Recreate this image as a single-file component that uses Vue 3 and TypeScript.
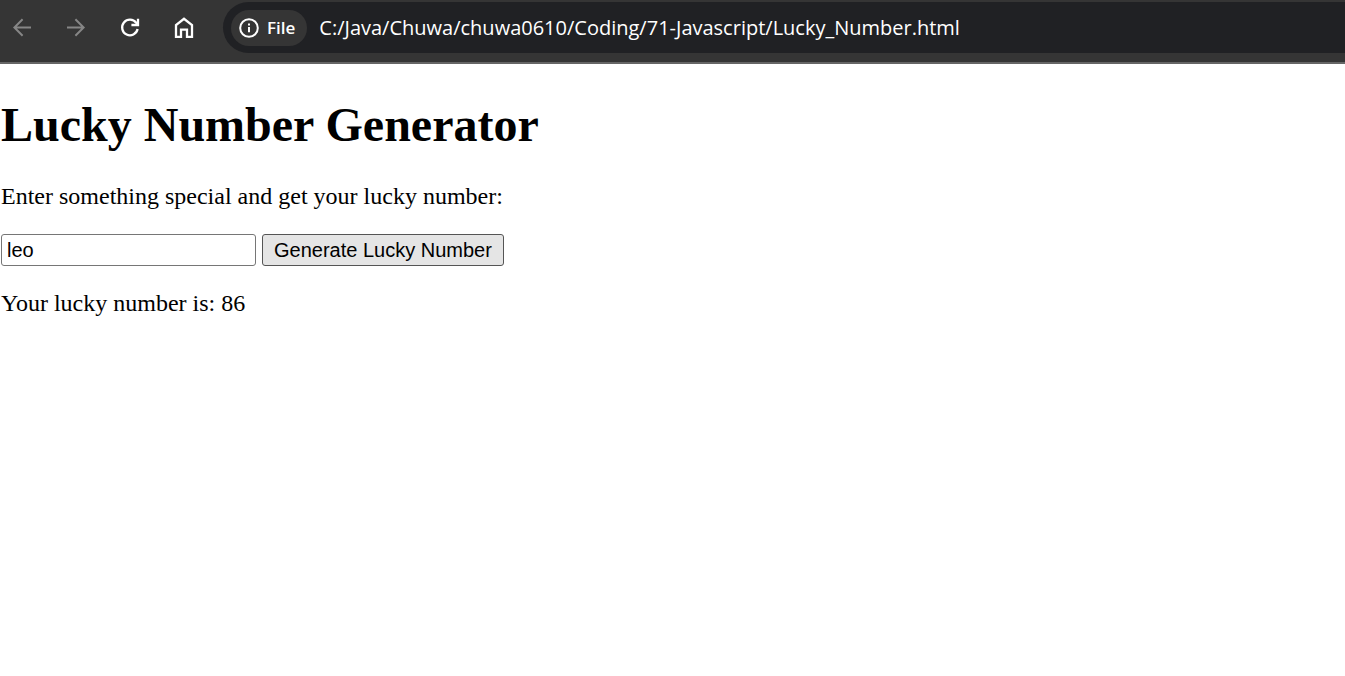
<script setup lang="ts">
import { ref } from 'vue'

const address = ref('C:/Java/Chuwa/chuwa0610/Coding/71-Javascript/Lucky_Number.html')
const phrase = ref('leo')
const luckyNumber = ref(86)

function generate(): void {
  luckyNumber.value = Math.floor(Math.random() * 100) + 1
}
</script>

<template>
  <div class="window">
    <header class="toolbar">
      <nav class="nav" aria-label="Browser navigation">
        <button class="nav-button" type="button" aria-label="Back" disabled>
          <svg width="24" height="24" viewBox="0 0 24 24"><path d="M21 11.5H4.4M12.6 3.3l-8.2 8.2 8.2 8.2" /></svg>
        </button>
        <button class="nav-button" type="button" aria-label="Forward" disabled>
          <svg width="24" height="24" viewBox="0 0 24 24"><path d="M3 11.5h16.6M11.4 3.3l8.2 8.2-8.2 8.2" /></svg>
        </button>
        <button class="nav-button" type="button" aria-label="Reload">
          <svg width="24" height="24" viewBox="0 0 24 24">
            <path d="M19.6 13.1A7.8 7.8 0 1 1 18.2 6.8L20 8.6" /><path d="M20 2.8V9h-6.6" />
          </svg>
        </button>
        <button class="nav-button" type="button" aria-label="Home">
          <svg width="24" height="24" viewBox="0 0 24 24"><path d="M4 20.8V9l8-6.2L20 9v11.8h-5v-7.2H9v7.2z" /></svg>
        </button>
      </nav>
      <div class="omnibox">
        <button class="chip" type="button">
          <svg width="20" height="20" viewBox="0 0 20 20">
            <circle cx="10" cy="10" r="8.8" /><path d="M10 9v5.2M10 5.4v2" />
          </svg>
          <span>File</span>
        </button>
        <input v-model="address" class="address" type="text" aria-label="Address" spellcheck="false" />
      </div>
    </header>
    <main class="page">
      <h1>Lucky Number Generator</h1>
      <label class="prompt" for="phrase">Enter something special and get your lucky number:</label>
      <form class="form" @submit.prevent="generate">
        <input id="phrase" v-model="phrase" class="phrase" type="text" />
        <button class="generate" type="submit">Generate Lucky Number</button>
      </form>
      <p class="result">Your lucky number is: {{ luckyNumber }}</p>
    </main>
  </div>
</template>

<style>
body {
  margin: 0;
  background: #fff;
}
</style>

<style scoped>
.window {
  color: #000;
}

.toolbar {
  display: flex;
  align-items: flex-start;
  padding: 2px 0 9px;
  background: #353535;
  border-bottom: 2px solid #666;
}

.nav {
  display: flex;
  flex: none;
  gap: 30px;
  padding: 14px 27px 0 10px;
}

.nav-button {
  display: block;
  width: 24px;
  height: 24px;
  padding: 0;
  border: 0;
  background: none;
}

.nav-button svg {
  display: block;
  fill: none;
  stroke: #fff;
  stroke-width: 2.3;
}

.nav-button:disabled svg {
  stroke: #868686;
  stroke-width: 2;
}

.omnibox {
  display: flex;
  flex: 1;
  align-items: center;
  min-width: 0;
  height: 51px;
  padding-left: 8px;
  border-radius: 26px 0 0 26px;
  background: #202124;
}

.chip {
  display: flex;
  flex: none;
  align-items: center;
  gap: 8px;
  height: 36px;
  padding: 0 12px 0 8px;
  border: 0;
  border-radius: 18px;
  background: #353535;
  color: #fff;
  font: 600 17px/24px "Segoe UI", "Open Sans", sans-serif;
}

.chip svg {
  fill: none;
  stroke: #fff;
  stroke-width: 2;
}

.address {
  flex: 1;
  min-width: 0;
  margin-left: 12px;
  padding: 0;
  border: 0;
  outline: 0;
  background: none;
  color: #fff;
  font: 20px/30px "Segoe UI", "Open Sans", sans-serif;
}

.page {
  padding: 33px 1px 0;
  font: 24px/28px "Liberation Serif", "Times New Roman", serif;
}

h1 {
  margin: 0 0 30px;
  font-size: 48px;
  line-height: 55px;
}

.prompt {
  display: block;
}

.form {
  display: flex;
  gap: 6px;
  margin: 24px 0 23px;
}

.phrase,
.generate {
  box-sizing: border-box;
  height: 32px;
  border-radius: 3px;
  color: #000;
  font: 20px/24px "Liberation Sans", Arial, sans-serif;
}

.phrase {
  width: 255px;
  padding: 0 5px;
  border: 1px solid #767676;
  background: #fff;
}

.generate {
  padding: 0 11px;
  border: 1px solid #555;
  background: #e5e5e5;
}

.result {
  margin: 0;
}
</style>
